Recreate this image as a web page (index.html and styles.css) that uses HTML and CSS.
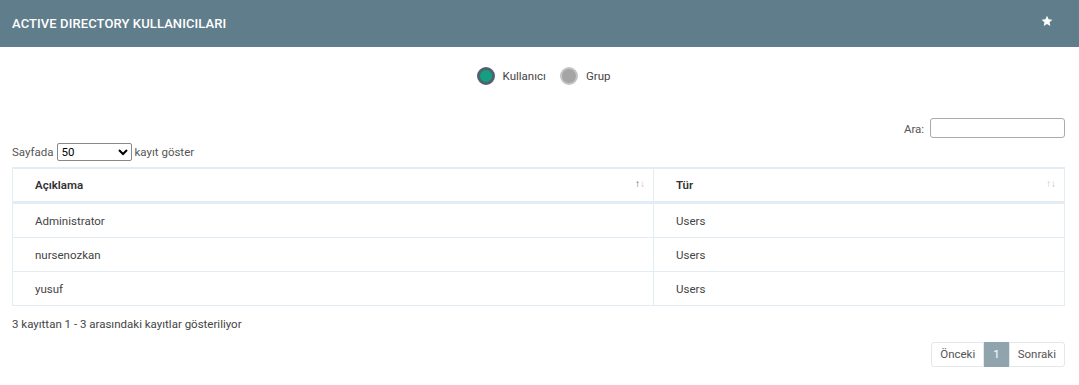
FILE: index.html
```html
<!DOCTYPE html>
<html lang="tr">
<head>
    <meta charset="UTF-8">
    <title>Active Directory Kullanıcıları</title>
    <link rel="stylesheet" href="styles.css">
</head>
<body>
    <div class="panel">
        <div class="panel-heading">
            <span class="panel-title">ACTIVE DIRECTORY KULLANICILARI</span>
            <svg class="star" width="12" height="12" viewBox="0 0 24 24"><path d="M12 1.5l3.2 7 7.6.8-5.7 5.1 1.6 7.5L12 18l-6.7 3.9 1.6-7.5L1.2 9.3l7.6-.8z" fill="#fff"/></svg>
        </div>
        <div class="panel-body">
            <div class="radio-group">
                <label class="radio"><span class="radio-dot checked"></span>Kullanıcı</label>
                <label class="radio"><span class="radio-dot"></span>Grup</label>
            </div>

            <div class="search-row">
                <label>Ara: <input type="text" class="search-input"></label>
            </div>
            <div class="length-row">
                Sayfada
                <select class="length-select"><option>50</option></select>
                kayıt göster
            </div>

            <table class="data-table">
                <thead>
                    <tr>
                        <th class="col-desc"><span>Açıklama</span><span class="sort"><b>↑</b>↓</span></th>
                        <th><span>Tür</span><span class="sort">↑↓</span></th>
                    </tr>
                </thead>
                <tbody>
                    <tr><td>Administrator</td><td>Users</td></tr>
                    <tr><td>nursenozkan</td><td>Users</td></tr>
                    <tr><td>yusuf</td><td>Users</td></tr>
                </tbody>
            </table>

            <div class="info">3 kayıttan 1 - 3 arasındaki kayıtlar gösteriliyor</div>

            <div class="pagination">
                <a class="page">Önceki</a>
                <a class="page active">1</a>
                <a class="page">Sonraki</a>
            </div>
        </div>
    </div>
</body>
</html>
```

FILE: styles.css
```css
body {
    margin: 0;
    font-family: Roboto, "Liberation Sans", sans-serif;
    font-size: 11.5px;
    color: #4a4a4a;
    background: #fff;
}
.panel-heading {
    height: 47px;
    background: #607d8b;
    display: flex;
    align-items: center;
    justify-content: space-between;
    padding: 0 26px 0 12px;
}
.panel-title {
    color: #fff;
    font-size: 13px;
    font-weight: 500;
    letter-spacing: 0.1px;
}
.star {
    margin-top: -6px;
}
.panel-body {
    padding: 0 14px 0 12px;
}
.radio-group {
    display: flex;
    justify-content: center;
    gap: 14px;
    padding: 20px 0 0 10px;
    height: 30px;
}
.radio {
    display: flex;
    align-items: center;
    height: 18px;
    gap: 8px;
    color: #444;
}
.radio-dot {
    width: 18px;
    height: 18px;
    border-radius: 50%;
    background: #a5a5a5;
    box-sizing: border-box;
    border: 2px solid #c4c4c4;
}
.radio-dot.checked {
    background: #14a07e;
    border: 3px solid #4f6170;
}
.search-row {
    display: flex;
    justify-content: flex-end;
    margin-top: 21px;
    color: #555;
}
.search-input {
    width: 135px;
    height: 20px;
    box-sizing: border-box;
    border: 1px solid #aaa;
    border-radius: 3px;
    margin-left: 3px;
}
.length-row {
    display: flex;
    align-items: center;
    gap: 3px;
    margin-top: 5px;
    color: #555;
}
.length-select {
    width: 75px;
    height: 18px;
    font-size: 11.5px;
    font-family: inherit;
    border: 1px solid #888;
    border-radius: 2px;
    background: #fff;
}
.data-table {
    width: 100%;
    border-collapse: collapse;
    margin-top: 6px;
    border: 1px solid #e3ebf3;
}
.data-table th {
    height: 32px;
    text-align: left;
    padding: 0 8px 0 22px;
    font-weight: 600;
    color: #333;
    border-top: 2px solid #e3ebf3;
    border-bottom: 3px solid #e3ebf3;
    border-right: 1px solid #e3ebf3;
}
.data-table th.col-desc {
    width: 610px;
}
.sort {
    float: right;
    font-weight: 400;
    font-size: 10px;
    color: #c6c6c6;
}
.sort b {
    font-weight: 400;
    color: #555;
}
.data-table td {
    height: 33px;
    padding: 0 22px;
    border-bottom: 1px solid #e3ebf3;
    border-right: 1px solid #e3ebf3;
    color: #444;
}
.info {
    margin-top: 11px;
    color: #444;
}
.pagination {
    display: flex;
    justify-content: flex-end;
    margin-top: 11px;
}
.page {
    display: block;
    height: 23px;
    line-height: 23px;
    padding: 0 8px;
    border: 1px solid #e3e8ec;
    color: #555;
}
.page:first-child {
    border-radius: 3px 0 0 3px;
}
.page:last-child {
    border-radius: 0 3px 3px 0;
}
.page.active {
    background: #90a4ae;
    border-color: #90a4ae;
    color: #fff;
    padding: 0 8px;
}
```
